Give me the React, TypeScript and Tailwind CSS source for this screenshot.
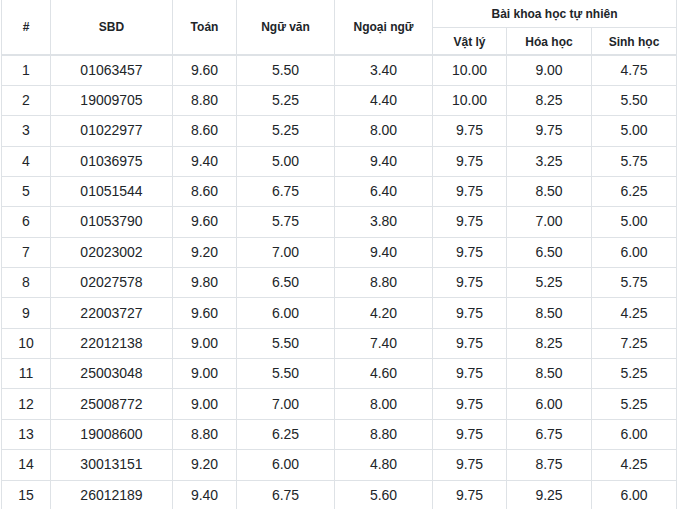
import React from "react";

const rows: [string, string, string, string, string, string, string, string][] = [
  ["1", "01063457", "9.60", "5.50", "3.40", "10.00", "9.00", "4.75"],
  ["2", "19009705", "8.80", "5.25", "4.40", "10.00", "8.25", "5.50"],
  ["3", "01022977", "8.60", "5.25", "8.00", "9.75", "9.75", "5.00"],
  ["4", "01036975", "9.40", "5.00", "9.40", "9.75", "3.25", "5.75"],
  ["5", "01051544", "8.60", "6.75", "6.40", "9.75", "8.50", "6.25"],
  ["6", "01053790", "9.60", "5.75", "3.80", "9.75", "7.00", "5.00"],
  ["7", "02023002", "9.20", "7.00", "9.40", "9.75", "6.50", "6.00"],
  ["8", "02027578", "9.80", "6.50", "8.80", "9.75", "5.25", "5.75"],
  ["9", "22003727", "9.60", "6.00", "4.20", "9.75", "8.50", "4.25"],
  ["10", "22012138", "9.00", "5.50", "7.40", "9.75", "8.25", "7.25"],
  ["11", "25003048", "9.00", "5.50", "4.60", "9.75", "8.50", "5.25"],
  ["12", "25008772", "9.00", "7.00", "8.00", "9.75", "6.00", "5.25"],
  ["13", "19008600", "8.80", "6.25", "8.80", "9.75", "6.75", "6.00"],
  ["14", "30013151", "9.20", "6.00", "4.80", "9.75", "8.75", "4.25"],
  ["15", "26012189", "9.40", "6.75", "5.60", "9.75", "9.25", "6.00"],
];

export default function App() {
  const th =
    "border border-[#dee2e6] border-t-0 text-[12px] font-bold text-[#212529] text-center align-middle p-0";
  const td =
    "border border-[#dee2e6] text-[14px] text-[#212529] text-center align-middle p-0";
  return (
    <div
      className="w-[680px] h-[509px] overflow-hidden bg-white pl-[1px]"
      style={{ fontFamily: '"Liberation Sans", Arial, sans-serif' }}
    >
      <table className="border-collapse table-fixed w-[675px]">
        <colgroup>
          <col className="w-[49px]" />
          <col className="w-[122px]" />
          <col className="w-[64px]" />
          <col className="w-[98px]" />
          <col className="w-[98px]" />
          <col className="w-[74px]" />
          <col className="w-[85px]" />
          <col className="w-[85px]" />
        </colgroup>
        <thead>
          <tr className="h-[27px]">
            <th rowSpan={2} className={`${th} border-b-2`}>#</th>
            <th rowSpan={2} className={`${th} border-b-2`}>SBD</th>
            <th rowSpan={2} className={`${th} border-b-2`}>Toán</th>
            <th rowSpan={2} className={`${th} border-b-2`}>Ngữ văn</th>
            <th rowSpan={2} className={`${th} border-b-2`}>Ngoại ngữ</th>
            <th colSpan={3} className={`${th} pt-[2px]`}>Bài khoa học tự nhiên</th>
          </tr>
          <tr className="h-[28px]">
            <th className={`${th} border-t border-b-2 pt-[2px]`}>Vật lý</th>
            <th className={`${th} border-t border-b-2 pt-[2px]`}>Hóa học</th>
            <th className={`${th} border-t border-b-2 pt-[2px]`}>Sinh học</th>
          </tr>
        </thead>
        <tbody>
          {rows.map((r) => (
            <tr key={r[0]} className="h-[30.36px]">
              {r.map((c, i) => (
                <td key={i} className={td}>
                  {c}
                </td>
              ))}
            </tr>
          ))}
        </tbody>
      </table>
    </div>
  );
}
